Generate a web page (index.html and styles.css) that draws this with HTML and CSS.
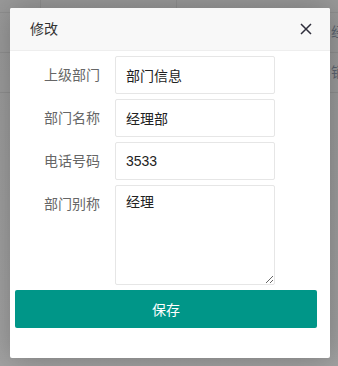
FILE: index.html
```html
<!DOCTYPE html>
<html lang="zh-CN">
<head>
  <meta charset="UTF-8" />
  <meta name="viewport" content="width=device-width, initial-scale=1.0" />
  <title>修改部门</title>
  <link rel="stylesheet" href="styles.css">
</head>
<body>

  <!-- 底层列表（被遮罩盖住） -->
  <div class="page-bg">
    <div class="bg-row bg-head"></div>
    <div class="bg-row"><span class="bg-cell">经理部</span></div>
    <div class="bg-row"><span class="bg-cell">销售部</span></div>
  </div>

  <div class="layer">
    <div class="layer-title">
      <span>修改</span>
      <a class="layer-close" href="#">
        <svg width="12" height="12" viewBox="0 0 12 12">
          <path d="M1 1 L11 11 M11 1 L1 11" stroke="#2f2e3b" stroke-width="1.5" fill="none" />
        </svg>
      </a>
    </div>

    <form class="layer-form">
      <label class="form-label">上级部门</label>
      <input class="form-input" type="text" value="部门信息" />

      <label class="form-label">部门名称</label>
      <input class="form-input" type="text" value="经理部" />

      <label class="form-label">电话号码</label>
      <input class="form-input" type="text" value="3533" />

      <label class="form-label">部门别称</label>
      <textarea class="form-textarea">经理</textarea>

      <button type="button" class="btn-save">保存</button>
    </form>
  </div>

</body>
</html>
```

FILE: styles.css
```css
html, body {
  margin: 0;
  padding: 0;
  height: 100%;
}
body {
  font-family: "Liberation Sans", "Noto Sans CJK SC", sans-serif;
  font-size: 14px;
  background-color: #9d9d9d;
  overflow: hidden;
}
.page-bg {
  height: 100%;
  background:
    linear-gradient(#8f8f8f, #8f8f8f) 40px 0 / 1px 13px no-repeat,
    linear-gradient(#8f8f8f, #8f8f8f) 176px 0 / 1px 13px no-repeat,
    linear-gradient(to bottom, #999 0%, #a2a2a2 100%);
}
.bg-row {
  height: 39px;
  border-bottom: 1px solid #8f8f8f;
  padding-left: 331px;
  line-height: 39px;
  color: #5d6470;
  white-space: nowrap;
  overflow: hidden;
}
.bg-head {
  height: 12px;
}
.layer {
  position: absolute;
  left: 10px;
  top: 8px;
  width: 320px;
  height: 350px;
  background: #fff;
  border-radius: 2px;
  box-shadow: 1px 1px 30px rgba(0, 0, 0, 0.25);
}
.layer-title {
  height: 42px;
  line-height: 42px;
  padding: 0 20px;
  background: #f8f8f8;
  border-bottom: 1px solid #eee;
  color: #333;
  border-radius: 2px 2px 0 0;
  display: flex;
  justify-content: space-between;
  align-items: center;
}
.layer-close {
  display: flex;
  margin-right: -2px;
}
.layer-form {
  display: grid;
  grid-template-columns: 90px 160px;
  column-gap: 15px;
  row-gap: 5px;
  padding-top: 5px;
  margin: 0;
}
.form-label {
  text-align: right;
  color: #666;
  line-height: 20px;
  padding: 9px 0;
}
.form-input, .form-textarea {
  font-family: inherit;
  font-size: 14px;
  color: #222;
  border: 1px solid #e6e6e6;
  border-radius: 2px;
  box-sizing: border-box;
  width: 160px;
  outline: none;
  background: #fff;
}
.form-input {
  height: 38px;
  padding: 0 10px;
}
.form-textarea {
  height: 100px;
  padding: 6px 10px;
  line-height: 20px;
  resize: vertical;
}
.btn-save {
  grid-column: 1 / -1;
  margin-left: 5px;
  width: 302px;
  height: 38px;
  border: none;
  border-radius: 2px;
  background-color: #009688;
  color: #fff;
  font-family: inherit;
  font-size: 14px;
  cursor: pointer;
}
```
